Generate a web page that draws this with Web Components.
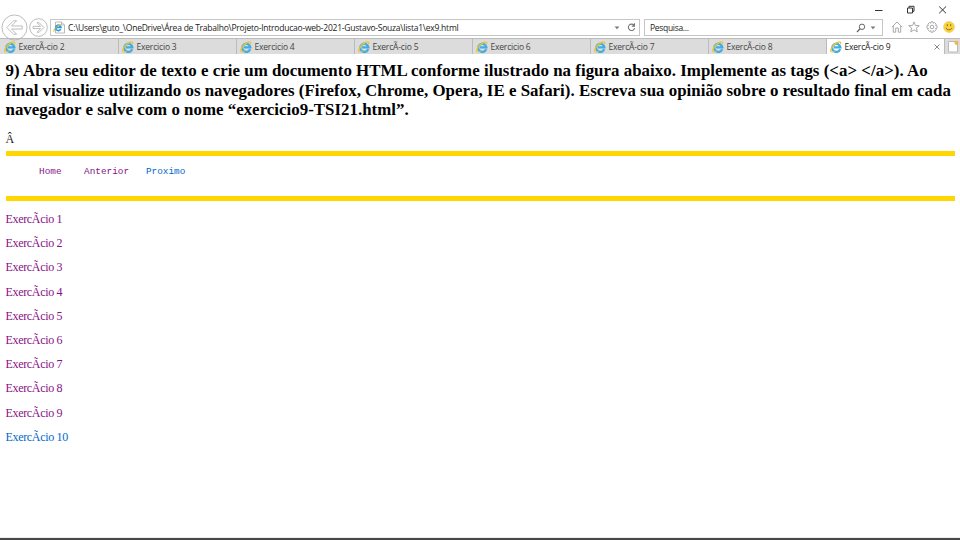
<!DOCTYPE html>
<html lang="pt-BR">
<head>
<meta charset="utf-8">
<title>ExercÃ­cio 9</title>
<style>
html,body{margin:0;width:960px;height:540px;overflow:hidden;background:#fff}
</style>
</head>
<body>
<browser-window></browser-window>
<script>
const define = (name, html, setup) => customElements.define(name, class extends HTMLElement {
  connectedCallback() {
    if (this.shadowRoot) return;
    const t = document.createElement('template');
    t.innerHTML = html;
    this.attachShadow({mode: 'open'}).append(t.content.cloneNode(true));
    if (setup) setup.call(this, this.shadowRoot);
  }
});

define('ie-icon', `<style>:host{display:block;width:12px;height:12px;flex:none;white-space:normal}svg{display:block;width:100%;height:100%}</style>
<svg viewBox="0 0 12 12" fill="none"><path d="M10.2 8.2A4.1 4.1 0 1 1 10.4 6.3H4" stroke="#42ade3" stroke-width="2.3"/><path d="M1.2 10.9C-.6 9 3.4 3.4 7.5 1.4c2.5-1.2 3.8-.4 3.1 1.7" stroke="#edc233" stroke-width="1.25"/><path d="M1.2 10.9c.9.7 2.3 0 3.6-.9" stroke="#edc233" stroke-width="1"/></svg>`);

define('window-controls', `<style>:host{display:flex;justify-content:flex-end;height:19px;box-sizing:border-box;padding:5px 13px 0 0;gap:23px}svg{width:9px;height:9px;fill:none;stroke:#333;stroke-width:1}</style>
<svg viewBox="0 0 9 9"><path d="M1 5.5h7.5"/></svg>
<svg viewBox="0 0 9 9"><path d="M1.5 3h5v5h-5zM3 3V1.3h5v5H6.5"/></svg>
<svg viewBox="0 0 9 9"><path d="M1.2 1.5l6.8 6.8M8 1.5L1.2 8.3"/></svg>`);

define('nav-arrow', `<style>:host{display:block;flex:none}svg{display:block;width:100%;height:100%;fill:none;stroke:#b9b9b9;stroke-width:1}:host([forward]) svg{stroke-width:1.4}</style>
<svg viewBox="0 0 28 28"><circle cx="14" cy="14" r="13"/><path stroke-linejoin="round" d="M6 14l7-7h3.2l-5.3 5.4H22v3.2H10.9l5.3 5.4H13z"/></svg>`, function(r) {
  if (this.hasAttribute('forward')) r.querySelector('path').setAttribute('transform', 'translate(28 0) scale(-1 1)');
});

define('input-box', `<style>:host{display:flex;align-items:center;box-sizing:border-box;height:17px;border:1px solid #c6c6c6;background:#fff;white-space:pre;color:#222}</style><slot></slot>`);

define('address-bar', `<style>
:host{display:flex;height:19px;align-items:flex-start;position:relative;font:8.5px/13px "Open Sans",sans-serif}
.back{width:27px;height:27px;margin:-5px 0 0 .5px}.fwd{width:19px;height:19px;margin:-1px 0 0 1.5px}
.addr{width:590px;margin-left:2px}.find{width:239px;margin-left:4px;padding-left:5px}
.page{width:12px;height:13px;margin:0 3px 0 2px}.path{letter-spacing:-.228px}.hint{letter-spacing:-.3px}
.cmd{width:12px;height:12px;margin:2px 0 0 5.4px;fill:none;stroke:#aaa;stroke-width:1}.first{margin-left:8px}
.sp{flex:1}.dd{width:6px;height:4px;fill:#777}.re{width:9px;height:9px;margin:0 4px 0 7px}.mag{width:10px;height:10px;margin-right:4px}.addr .dd{margin-right:-3px}.d2{margin-right:6px}
</style>
<nav-arrow class="back"></nav-arrow><nav-arrow class="fwd" forward></nav-arrow>
<input-box class="addr"><svg class="page" viewBox="0 0 12 13" fill="none"><path d="M2.5 1h6l3 3v8h-9z" fill="#fff" stroke="#aaa" stroke-width=".8"/><path d="M8.5 1v3h3" stroke="#aaa" stroke-width=".8"/><path d="M7.7 8.2A2.7 2.7 0 1 1 8 6.4H3.5" stroke="#299be0" stroke-width="1.7"/><path d="M1 10.8C0 9 3.5 4.4 8.7 3.4" stroke="#e7bd36"/></svg><span class="path">C:\\Users\\guto_\\OneDrive\\Área de Trabalho\\Projeto-Introducao-web-2021-Gustavo-Souza\\lista1\\ex9.html</span><span class="sp"></span><svg class="dd" viewBox="0 0 6 4"><path d="M.6.5h4.8L3 3.3z"/></svg><svg class="re" style="margin-left:10px;margin-right:3px" viewBox="0 0 9 9" fill="none" stroke="#777" stroke-width="1.1"><path d="M7.1 2.3A3.2 3.2 0 1 0 7.7 5M7.5.3v2.8H4.8"/></svg></input-box>
<input-box class="find"><span class="hint">Pesquisa...</span><span class="sp"></span><svg class="mag" viewBox="0 0 10 10" fill="none" stroke="#666"><circle cx="6" cy="3.8" r="2.7"/><path d="M4 5.8L1 9" stroke-width="1.3"/></svg><svg class="dd d2" viewBox="0 0 6 4"><path d="M.6.5h4.8L3 3.3z"/></svg></input-box>
<svg class="cmd first" viewBox="0 0 12 12"><path d="M1 6l5-5 5 5M2.3 5v6.2h2.4V7h2.6v4.2h2.4V5"/></svg>
<svg class="cmd" viewBox="0 0 12 12"><path d="M6 .9l1.4 3.6 3.9.2-3 2.4 1 3.8L6 8.8l-3.3 2.1 1-3.8-3-2.4 3.9-.2z"/></svg>
<svg class="cmd" viewBox="0 0 12 12"><circle cx="6" cy="6" r="1.8"/><path d="M5 .8h2l.3 1.5 1.2-.8 1.7 1.7-.8 1.2 1.6.4v2.3l-1.6.4.8 1.2-1.7 1.7-1.2-.8-.3 1.6H5l-.3-1.6-1.2.8-1.7-1.7.8-1.2L1 7.1V4.8l1.6-.4-.8-1.2 1.7-1.7 1.2.8z"/></svg>
<svg class="cmd" viewBox="0 0 12 12"><circle cx="6" cy="6" r="5.4" fill="#fbd43b" stroke="#ecc23b" stroke-width=".6"/><path d="M4.3 3.2v2M7.7 3.2v2M3 6.8c1 2.7 5 2.7 6 0" stroke="#705c28" stroke-width=".9"/></svg>`);

define('browser-tab', `<style>
:host{display:flex;flex:none;align-items:center;box-sizing:border-box;width:118px;height:15px;padding-left:3px;border-right:1px solid #bbb;background:#dcdcdc;color:#444;font:8.5px/14px "Open Sans",sans-serif;white-space:pre;letter-spacing:-.17px}
:host([active]){background:#fff;color:#222}
ie-icon{margin-right:2.4px}svg{display:none;width:6px;height:6px;margin:0 4px 0 auto;stroke:#888;fill:none}:host([active]) svg{display:block}
</style><ie-icon></ie-icon><span><slot></slot></span><svg viewBox="0 0 6 6"><path d="M.5.5l5 5M5.5.5l-5 5"/></svg>`);

define('tab-strip', `<style>:host{display:flex;box-sizing:border-box;height:16px;background:#dcdcdc;border-top:1px solid #bbb;padding-left:1px}
.new{flex:1;padding:1px 0 0 2px;background:#dcdcdc}.new svg{display:block;width:13px;height:13px}</style>
<slot></slot><div class="new"><svg viewBox="0 0 13 13"><path d="M1.5 1.5h9v10.5h-9z" fill="#fff" stroke="#bbb"/><circle cx="9.5" cy="2.8" r="2.1" fill="#f4b650"/></svg></div>`);

define('gold-rule', `<style>:host{display:block;height:5px;background:#ffd600}</style>`);

define('page-link', `<style>:host{display:inline-block}a{color:#870f87;text-decoration:none}:host([fresh]) a{color:#0068cb}</style><a><slot></slot></a>`);

define('exercise-page', `<style>
:host{display:block;padding:7px 5.5px 0;color:#000;font:12px/14px "Liberation Serif",serif}
h1{margin:0;height:58px;font-size:16.87px;line-height:19.6px;font-weight:bold;white-space:nowrap}
p{margin:0;height:32px;padding-top:13px;box-sizing:border-box;color:#222}
nav{height:40px;box-sizing:border-box;padding:9px 0 0 33.6px;font:9.37px/14px "Liberation Mono",monospace;display:flex}
.a{margin-left:22.5px}.p{margin-left:17px}
.list{padding-top:11px;display:grid;grid-auto-rows:24.2px;letter-spacing:-.33px}
.l1{letter-spacing:.034px}.l2{letter-spacing:.02px}.l3{letter-spacing:.02px}
</style>
<h1><span class="l1">9) Abra seu editor de texto e crie um documento HTML conforme ilustrado na figura abaixo. Implemente as tags (&lt;a&gt; &lt;/a&gt;). Ao</span><br><span class="l2">final visualize utilizando os navegadores (Firefox, Chrome, Opera, IE e Safari). Escreva sua opinião sobre o resultado final em cada</span><br><span class="l3">navegador e salve com o nome “exercicio9-TSI21.html”.</span></h1>
<p>Â</p>
<gold-rule></gold-rule>
<nav><page-link>Home</page-link><page-link class="a">Anterior</page-link><page-link class="p" fresh>Proximo</page-link></nav>
<gold-rule></gold-rule>
<div class="list"></div>`, function(r) {
  const list = r.querySelector('.list');
  for (let i = 1; i <= 10; i++) {
    const link = document.createElement('page-link');
    link.textContent = 'ExercÃcio ' + i;
    if (i === 10) link.setAttribute('fresh', '');
    list.append(link);
  }
});

define('browser-window', `<style>:host{display:flex;flex-direction:column;width:960px;height:540px;background:#fff}exercise-page{flex:1}
.edge{height:3px;background:linear-gradient(#eee 0 33%,#aaa 33% 50%,#484848 50%)}</style>
<window-controls></window-controls><address-bar></address-bar>
<tab-strip><browser-tab>ExercÃ-cio 2</browser-tab><browser-tab>Exercicio 3</browser-tab><browser-tab>Exercicio 4</browser-tab><browser-tab>ExercÃ-cio 5</browser-tab><browser-tab>Exercicio 6</browser-tab><browser-tab>ExercÃ-cio 7</browser-tab><browser-tab>ExercÃ-cio 8</browser-tab><browser-tab active>ExercÃ-cio 9</browser-tab></tab-strip>
<exercise-page></exercise-page><div class="edge"></div>`);
</script>
</body>
</html>
